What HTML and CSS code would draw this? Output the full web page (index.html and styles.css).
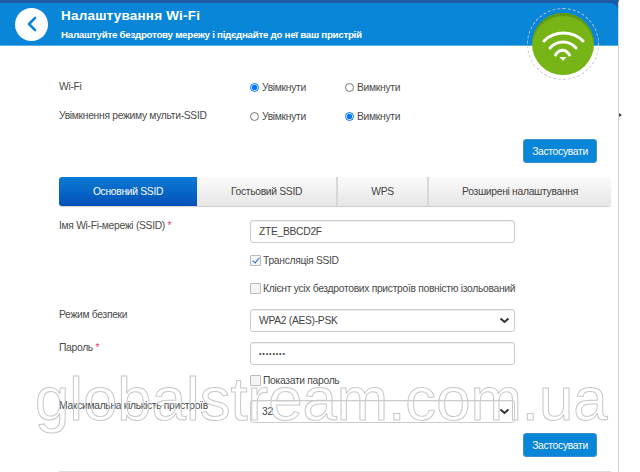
FILE: index.html
```html
<!DOCTYPE html>
<html lang="uk">
<head>
    <meta charset="UTF-8">
    <title>Налаштування Wi-Fi</title>
    <link rel="stylesheet" href="styles.css">
</head>
<body>
    <div class="page">
        <!-- Header -->
        <div class="header">
            <div class="back">
                <svg width="12" height="16" viewBox="0 0 12 16"><path d="M9 2 L3 8 L9 14" fill="none" stroke="#0a86d8" stroke-width="2.6" stroke-linecap="round" stroke-linejoin="round"/></svg>
            </div>
            <div class="header-text">
                <h1>Налаштування Wi-Fi</h1>
                <p>Налаштуйте бездротову мережу і підєднайте до неї ваш пристрій</p>
            </div>
        </div>
        <div class="wifi-badge">
            <svg width="64" height="64" viewBox="0 0 64 64">
                <g fill="none" stroke="#fff" stroke-width="3" stroke-linecap="round">
                    <path d="M13 29 C23 18.3 42 18.3 52 29"/>
                    <path d="M19 36 C26 28 38 28 45 36"/>
                    <path d="M24.5 43 C28 36.5 35 36.5 38.5 43"/>
                </g>
                <path d="M28.5 45 H35.5 L32 49 Z" fill="#fff"/>
            </svg>
        </div>

        <div class="content">
            <div class="row radio-row first">
                <div class="label">Wi-Fi</div>
                <label class="radio"><input type="radio" name="wifi" checked>Увімкнути</label>
                <label class="radio"><input type="radio" name="wifi">Вимкнути</label>
            </div>
            <div class="row radio-row">
                <div class="label">Увімкнення режиму мульти-SSID</div>
                <label class="radio"><input type="radio" name="multi">Увімкнути</label>
                <label class="radio"><input type="radio" name="multi" checked>Вимкнути</label>
            </div>
            <div class="actions top-actions"><button class="apply">Застосувати</button></div>

            <!-- Tabs -->
            <div class="tabs">
                <div class="tab active">Основний SSID</div>
                <div class="tab guest">Гостьовий SSID</div>
                <div class="tab wps">WPS</div>
                <div class="tab adv">Розширені налаштування</div>
            </div>

            <div class="row field ssid">
                <div class="label">Імя Wi-Fi-мережі (SSID) <span class="req">*</span></div>
                <input class="input" type="text" value="ZTE_BBCD2F">
            </div>
            <div class="row check-row">
                <label class="check"><input type="checkbox" checked>Трансляція SSID</label>
            </div>
            <div class="row check-row isolate">
                <label class="check"><input type="checkbox">Клієнт усіх бездротових пристроїв повністю ізольований</label>
            </div>
            <div class="row field security">
                <div class="label">Режим безпеки</div>
                <div class="select">WPA2 (AES)-PSK<svg width="11" height="7" viewBox="0 0 11 7"><path d="M1.5 1.5 L5.5 5 L9.5 1.5" fill="none" stroke="#333" stroke-width="2"/></svg></div>
            </div>
            <div class="row field password">
                <div class="label">Пароль <span class="req">*</span></div>
                <input class="input pass" type="password" value="12345678">
            </div>
            <div class="row check-row show-pass">
                <label class="check"><input type="checkbox">Показати пароль</label>
            </div>
            <div class="row field max">
                <div class="label">Максимальна кількість пристроїв</div>
                <div class="select">32<svg width="11" height="7" viewBox="0 0 11 7"><path d="M1.5 1.5 L5.5 5 L9.5 1.5" fill="none" stroke="#333" stroke-width="2"/></svg></div>
            </div>
            <div class="actions bottom-actions"><button class="apply">Застосувати</button></div>
            <div class="bottom-line"></div>
        </div>
        <div class="watermark">globalstream.com.ua</div>
    </div>
    <div class="edge-mark"></div>
</body>
</html>
```
FILE: styles.css
```css
/* Basic styling */
html, body {
    margin: 0;
    padding: 0;
    height: 472px;
    overflow: hidden;
    background-color: #fff;
}
body {
    font-family: "Liberation Sans", Arial, sans-serif;
    font-size: 10.3px;
    letter-spacing: -0.3px;
    color: #4a4a4a;
}
.page {
    position: relative;
    width: 619px;
    height: 472px;
    box-sizing: border-box;
    border-right: 1px solid #d5d5d5;
    border-top: 3px solid #1d5ba6;
    background: linear-gradient(#1d5ba6 10px, #fff 10px);
    overflow: hidden;
}
.edge-mark {
    position: absolute;
    left: 619px;
    top: 113px;
    width: 0;
    height: 0;
    border-left: 3px solid #445;
    border-top: 2px solid transparent;
    border-bottom: 2px solid transparent;
}

/* Header */
.header {
    display: flex;
    align-items: center;
    height: 43px;
    padding-left: 15px;
    background-color: #0a86d8;
    border-top-right-radius: 8px;
    border-bottom: 1px solid #5aaee6;
    box-sizing: border-box;
    color: #fff;
}
.back {
    display: flex;
    align-items: center;
    justify-content: center;
    width: 33px;
    height: 33px;
    margin-right: 13px;
    border-radius: 50%;
    background-color: #fff;
}
.header-text h1 {
    margin: 0 0 6px;
    font-size: 13.5px;
    line-height: 15px;
    letter-spacing: 0.2px;
}
.header-text p {
    margin: 0;
    font-size: 9.8px;
    font-weight: bold;
    line-height: 12px;
}
.wifi-badge {
    position: absolute;
    left: 532px;
    top: 10px;
    display: flex;
    align-items: center;
    justify-content: center;
    width: 62px;
    height: 62px;
    border-radius: 50%;
    background-color: #76b515;
    box-shadow: inset 0 3px 0 #5f9a12;
}
.wifi-badge svg {
    flex: none;
}
.wifi-badge::after {
    content: "";
    position: absolute;
    inset: -5px;
    border: 1px dashed #c4c8cc;
    border-radius: 50%;
}

/* Form rows */
.content {
    padding: 0 7px 0 59px;
}
.row {
    display: flex;
}
.label {
    width: 191px;
    flex: none;
}
.radio-row {
    align-items: center;
    height: 29px;
}
.radio-row.first {
    margin-top: 26px;
}
.radio {
    display: flex;
    align-items: center;
    width: 95px;
    padding-top: 2px;
}
.radio input {
    width: 9px;
    height: 9px;
    margin: 0 3px 0 0;
}
.actions {
    display: flex;
    justify-content: flex-end;
    padding-right: 14px;
}
.top-actions {
    margin-top: 9px;
}
.bottom-actions {
    margin-top: 10px;
}
.apply {
    width: 74px;
    height: 24px;
    padding: 0;
    border: 1px solid #3b93d6;
    border-radius: 3px;
    background-color: #0a86d8;
    color: #fff;
    font-family: inherit;
    font-size: 10.3px;
    letter-spacing: -0.3px;
}

/* Tabs */
.tabs {
    display: flex;
    height: 29px;
    margin-top: 14px;
    border-radius: 3px;
    background: linear-gradient(#fbfbfb, #e6e6e6);
    box-shadow: 0 1px 1px #ccc;
    color: #444;
}
.tab {
    display: flex;
    align-items: center;
    justify-content: center;
    box-sizing: border-box;
    border-right: 2px solid #d8d8d8;
}
.tab.active {
    width: 138px;
    border-right: none;
    border-radius: 3px 0 0 3px;
    background: linear-gradient(#0a7bd4, #0450b8);
    color: #fff;
}
.tab.guest {
    width: 141px;
}
.tab.wps {
    width: 91px;
}
.tab.adv {
    flex: 1;
    border-right: none;
}

/* Fields */
.ssid {
    margin-top: 14px;
}
.req {
    color: #e0407a;
}
.input, .select {
    display: flex;
    align-items: center;
    justify-content: space-between;
    box-sizing: border-box;
    width: 265px;
    height: 23px;
    margin: 0;
    padding: 0 8px;
    border: 1px solid #ccc;
    border-radius: 3px;
    background-color: #fff;
    font-family: inherit;
    font-size: 10.3px;
    letter-spacing: -0.3px;
    color: #444;
    box-shadow: inset 0 1px 1px #eee;
}
.select {
    padding-right: 4px;
}
.max .select {
    padding-left: 11px;
}
.pass {
    font-size: 7px;
    letter-spacing: 0.9px;
}
.check-row {
    padding-left: 191px;
    margin-top: 10px;
    height: 14px;
}
.check {
    display: flex;
    align-items: center;
}
.check input {
    position: relative;
    appearance: none;
    box-sizing: border-box;
    width: 11px;
    height: 11px;
    margin: 0 2px 0 0;
    border: 1px solid #bbb;
    border-radius: 1px;
    background-color: #f4f4f4;
}
.check input:checked::after {
    content: "";
    position: absolute;
    left: 3px;
    top: 0;
    width: 3px;
    height: 6px;
    border: solid #1f6fd0;
    border-width: 0 1.5px 1.5px 0;
    transform: rotate(40deg);
}
.isolate {
    margin-top: 14px;
}
.security {
    margin-top: 14px;
}
.password {
    margin-top: 10px;
}
.show-pass {
    margin-top: 8px;
}
.max {
    margin-top: 13px;
}
.bottom-line {
    height: 1px;
    margin-top: 14px;
    background-color: #ddd;
}

/* Watermark over the form */
.watermark {
    position: absolute;
    left: 35px;
    top: 356px;
    font-size: 61.7px;
    line-height: 80px;
    letter-spacing: 0;
    white-space: nowrap;
    color: transparent;
    -webkit-text-stroke: 1px #c8c8c8;
    pointer-events: none;
}
```
